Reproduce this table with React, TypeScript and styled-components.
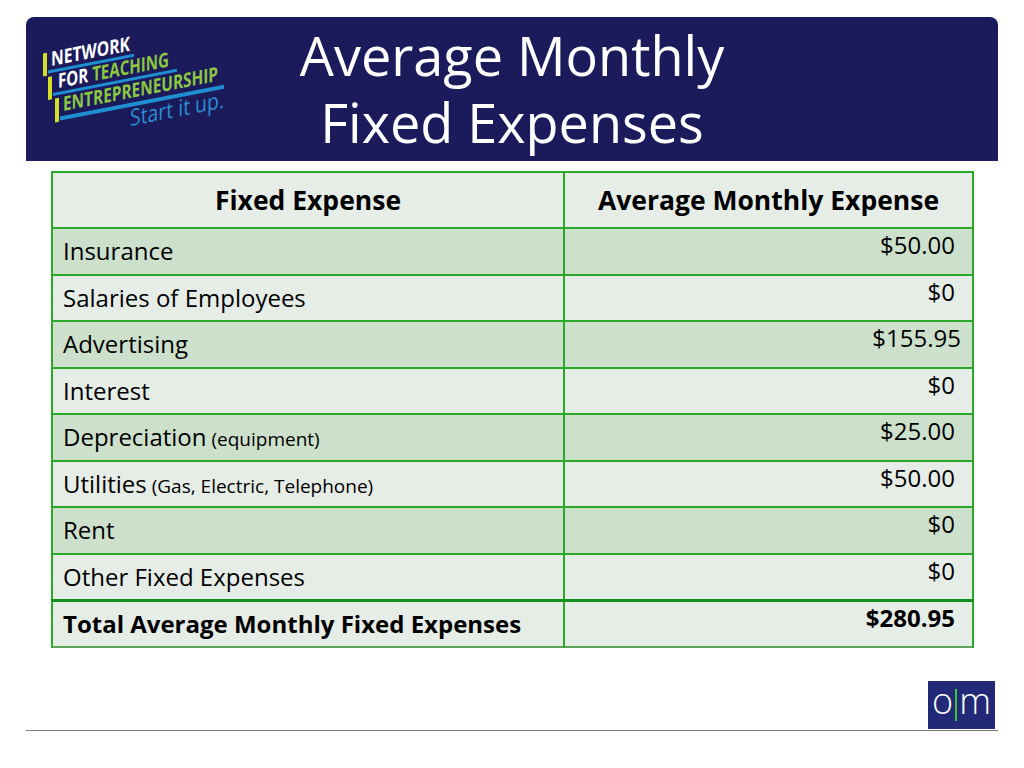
import React from 'react'
import styled, { createGlobalStyle } from 'styled-components'

const navy = '#1b1b5c'
const green = '#2aa82a'

const GlobalStyle = createGlobalStyle`
    html, body {
        margin: 0;
        padding: 0;
        background: #ffffff;
    }
    body {
        font-family: "Open Sans", "Noto Sans", "DejaVu Sans", sans-serif;
        color: #000000;
    }
`

const Page = styled.div`
    width: 1024px;
    height: 768px;
    padding-top: 17px;
    box-sizing: border-box;
`

const Header = styled.header`
    margin: 0 26px;
    height: 144px;
    background: ${navy};
    border-radius: 8px 8px 0 0;
    display: grid;
    grid-template-columns: 1fr auto 1fr;
    align-items: start;
`

const LogoCell = styled.div`
    padding: 13px 0 0 9px;
`

const Title = styled.h1`
    margin: 0;
    padding-top: 5px;
    font-family: "Open Sans", "Noto Sans", sans-serif;
    font-weight: 400;
    font-size: 54px;
    line-height: 67px;
    color: #ffffff;
    text-align: center;
    white-space: nowrap;
`

const Table = styled.table`
    margin: 10px 0 0 51px;
    width: 923px;
    border-collapse: collapse;
    table-layout: fixed;
    font-size: 24px;
    border-bottom: 2px solid #5ea45e;
`

const HeadCell = styled.th`
    height: 54px;
    padding: 0 8px;
    background: #e6ece6;
    border: 2px solid ${green};
    font-size: 26.5px;
    font-weight: 700;
    text-align: center;
    vertical-align: middle;
    line-height: 1.3;
    white-space: nowrap;
`

const Row = styled.tr<{ $total?: boolean }>`
    height: 46.5px;
    & > td {
        border-top: ${p => (p.$total ? '3px solid #12901e' : `2px solid ${green}`)};
    }
`

const LabelCell = styled.td<{ $shade: boolean; $bold?: boolean }>`
    padding: 0 10px;
    background: ${p => (p.$shade ? '#cce0cc' : '#e6ece6')};
    border-left: 2px solid ${green};
    border-right: 2px solid ${green};
    font-weight: ${p => (p.$bold ? 700 : 400)};
    line-height: 1.25;
    vertical-align: middle;
    white-space: nowrap;
`

const AmountCell = styled.td<{ $shade: boolean; $bold?: boolean; $pad?: number }>`
    padding: 1px ${p => p.$pad ?? 17}px 0 10px;
    background: ${p => (p.$shade ? '#cce0cc' : '#e6ece6')};
    border-left: 2px solid ${green};
    border-right: 2px solid ${green};
    font-weight: ${p => (p.$bold ? 700 : 400)};
    text-align: right;
    vertical-align: top;
    line-height: 1.25;
`

const Note = styled.span`
    font-size: 19px;
`

const Footer = styled.div`
    margin: 33px 29px 0 0;
    display: flex;
    justify-content: flex-end;
`

const Mark = styled.div`
    width: 67px;
    height: 48px;
    background: #222a78;
    display: flex;
    align-items: center;
    justify-content: center;
    gap: 2px;
    color: #ffffff;
    font-family: "Open Sans", "Noto Sans", sans-serif;
    font-weight: 300;
    font-size: 36px;
    line-height: 1;
`

const MarkLetter = styled.span`
    margin-top: -8px;
`

const MarkBar = styled.span`
    width: 2px;
    height: 32px;
    background: #3ec43e;
`

const Rule = styled.div`
    margin: 1px 26px 0;
    height: 1.5px;
    background: #7a7a7a;
`

type Expense = {
    label: string
    note?: string
    amount: string
    pad?: number
}

const expenses: Expense[] = [
    { label: 'Insurance', amount: '$50.00' },
    { label: 'Salaries of Employees', amount: '$0' },
    { label: 'Advertising', amount: '$155.95', pad: 11 },
    { label: 'Interest', amount: '$0' },
    { label: 'Depreciation', note: '(equipment)', amount: '$25.00' },
    { label: 'Utilities', note: '(Gas, Electric, Telephone)', amount: '$50.00' },
    { label: 'Rent', amount: '$0' },
    { label: 'Other Fixed Expenses', amount: '$0' },
]

const yellow = '#d4de26'
const lime = '#8dc63f'
const sky = '#1f8fd2'

const NfteLogo = () => (
    <svg width="210" height="112" viewBox="0 0 210 112" overflow="visible">
        <g fontFamily='"Open Sans", "Noto Sans", sans-serif' fontWeight="700" fontSize="20">
            <g transform="translate(16,36) skewY(-11)">
                <rect x="-8" y="-14" width="4" height="23" fill={yellow} />
                <text x="0" y="0" fill="#ffffff"
                      textLength="79" lengthAdjust="spacingAndGlyphs">NETWORK</text>
                <rect x="-3" y="4" width="86" height="3" fill={sky} />
            </g>
            <g transform="translate(23,58) skewY(-11)">
                <rect x="-10" y="-13" width="4" height="23" fill={yellow} />
                <text x="0" y="0" fill="#ffffff"
                      textLength="111" lengthAdjust="spacingAndGlyphs">
                    FOR <tspan fill={lime}>TEACHING</tspan>
                </text>
                <rect x="-5" y="4" width="124" height="3" fill={sky} />
            </g>
            <g transform="translate(28,81) skewY(-11)">
                <rect x="-8" y="-14" width="4" height="24" fill={yellow} />
                <text x="0" y="0" fill={lime}
                      textLength="155" lengthAdjust="spacingAndGlyphs">ENTREPRENEURSHIP</text>
                <rect x="-3" y="5" width="164" height="4" fill={sky} />
            </g>
            <g transform="translate(95,96) skewY(-11)">
                <text x="0" y="0" fontSize="23" fontWeight="400" fill="#2a8fd0"
                      textLength="94" lengthAdjust="spacingAndGlyphs">Start it up.</text>
            </g>
        </g>
    </svg>
)

export default function App() {
    return (
        <Page>
            <GlobalStyle />
            <Header>
                <LogoCell>
                    <NfteLogo />
                </LogoCell>
                <Title>
                    Average Monthly
                    <br />
                    Fixed Expenses
                </Title>
                <div />
            </Header>
            <Table>
                <colgroup>
                    <col style={{ width: 512 }} />
                    <col />
                </colgroup>
                <thead>
                    <tr>
                        <HeadCell>Fixed Expense</HeadCell>
                        <HeadCell>Average Monthly Expense</HeadCell>
                    </tr>
                </thead>
                <tbody>
                    {expenses.map((e, i) => (
                        <Row key={e.label}>
                            <LabelCell $shade={i % 2 === 0}>
                                {e.label}
                                {e.note && <Note> {e.note}</Note>}
                            </LabelCell>
                            <AmountCell $shade={i % 2 === 0} $pad={e.pad}>{e.amount}</AmountCell>
                        </Row>
                    ))}
                    <Row $total>
                        <LabelCell $shade={false} $bold>Total Average Monthly Fixed Expenses</LabelCell>
                        <AmountCell $shade={false} $bold>$280.95</AmountCell>
                    </Row>
                </tbody>
            </Table>
            <Footer>
                <Mark>
                    <MarkLetter>o</MarkLetter>
                    <MarkBar />
                    <MarkLetter>m</MarkLetter>
                </Mark>
            </Footer>
            <Rule />
        </Page>
    )
}
